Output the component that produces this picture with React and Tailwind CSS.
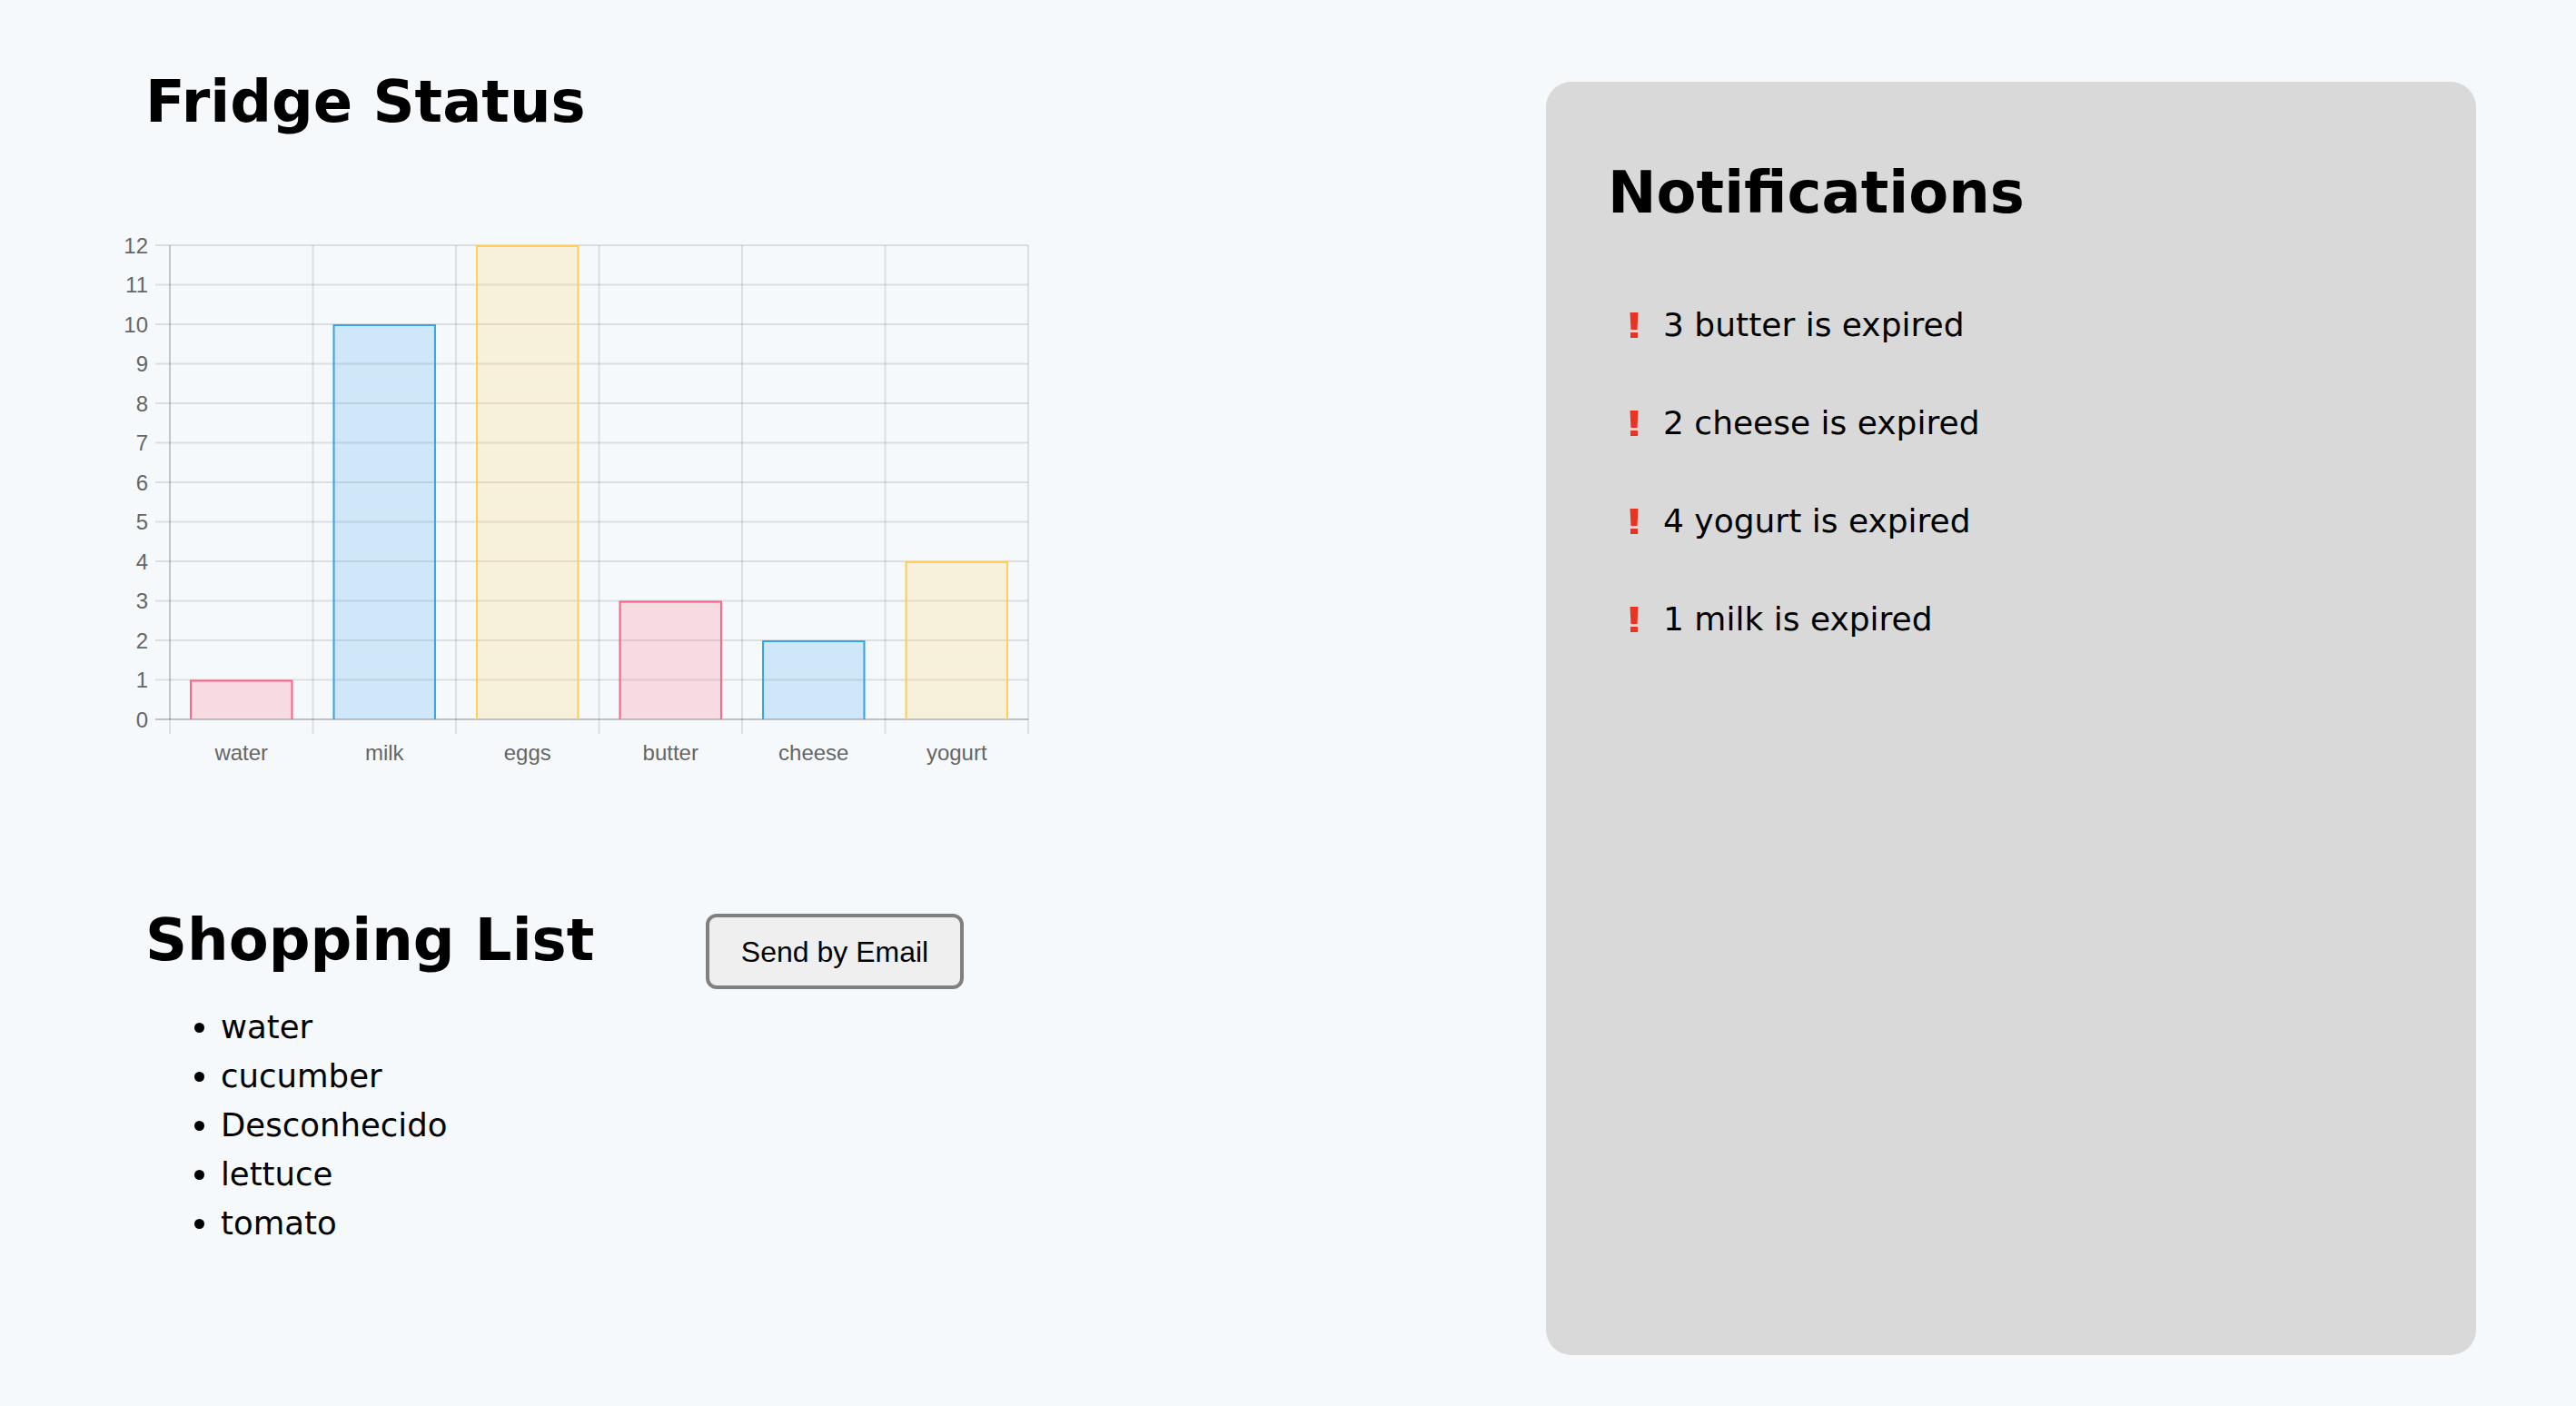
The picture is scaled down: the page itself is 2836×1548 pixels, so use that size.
import React from 'react';

const items = [
  { label: 'water', value: 1, color: 'pink' },
  { label: 'milk', value: 10, color: 'blue' },
  { label: 'eggs', value: 12, color: 'yellow' },
  { label: 'butter', value: 3, color: 'pink' },
  { label: 'cheese', value: 2, color: 'blue' },
  { label: 'yogurt', value: 4, color: 'yellow' },
];

const palette = {
  pink: { fill: 'rgba(255,99,132,0.2)', stroke: 'rgb(255,99,132)' },
  blue: { fill: 'rgba(54,162,235,0.2)', stroke: 'rgb(54,162,235)' },
  yellow: { fill: 'rgba(255,206,86,0.2)', stroke: 'rgb(255,206,86)' },
};

const shopping = ['water', 'cucumber', 'Desconhecido', 'lettuce', 'tomato'];

const notifications = [
  '3 butter is expired',
  '2 cheese is expired',
  '4 yogurt is expired',
  '1 milk is expired',
];

// chart geometry (svg coords)
const left = 67;
const right = 1012;
const top = 20;
const zero = 542;
const step = 43.5;
const col = (right - left) / 6;
const barW = col * 0.72;

function FridgeChart() {
  const ticks = Array.from({ length: 13 }, (_, i) => i);
  return (
    <svg width="1020" height="600" viewBox="0 0 1020 600" className="-ml-[40px] mt-[106px] block">
      {ticks.map((v) => {
        const y = zero - v * step;
        return (
          <line
            key={'h' + v}
            x1={51}
            x2={right}
            y1={y}
            y2={y}
            stroke={v === 0 ? 'rgba(0,0,0,0.22)' : 'rgba(0,0,0,0.1)'}
            strokeWidth="2"
          />
        );
      })}
      {Array.from({ length: 7 }, (_, i) => {
        const x = left + col * i;
        return (
          <g key={'v' + i}>
            <line x1={x} x2={x} y1={top} y2={zero} stroke={i === 0 ? 'rgba(0,0,0,0.2)' : 'rgba(0,0,0,0.1)'} strokeWidth="2" />
            <line x1={x} x2={x} y1={zero} y2={zero + 16} stroke="rgba(0,0,0,0.1)" strokeWidth="2" />
          </g>
        );
      })}
      {items.map((it, i) => {
        const x = left + col * i + (col - barW) / 2;
        const h = it.value * step;
        const y = zero - h;
        const c = palette[it.color];
        return (
          <g key={it.label}>
            <rect x={x} y={y} width={barW} height={h} fill={c.fill} />
            <polyline
              points={`${x + 1},${zero} ${x + 1},${y + 1} ${x + barW - 1},${y + 1} ${x + barW - 1},${zero}`}
              fill="none"
              stroke={c.stroke}
              strokeWidth="2"
            />
          </g>
        );
      })}
      {ticks.map((v) => (
        <text
          key={'t' + v}
          x={43}
          y={zero - v * step}
          textAnchor="end"
          dominantBaseline="central"
          fontFamily="'Liberation Sans', Arial, sans-serif"
          fontSize="24"
          fill="#666"
        >
          {v}
        </text>
      ))}
      {items.map((it, i) => (
        <text
          key={'x' + it.label}
          x={left + col * (i + 0.5)}
          y={586.7}
          textAnchor="middle"
          fontFamily="'Liberation Sans', Arial, sans-serif"
          fontSize="24"
          fill="#666"
        >
          {it.label}
        </text>
      ))}
    </svg>
  );
}

function Bang() {
  return (
    <svg width="10" height="28" viewBox="0 0 10 28" className="shrink-0">
      <polygon points="0.5,0 9.5,0 8.5,19 1.5,19" fill="#ea3323" />
      <rect x="1" y="22" width="8" height="6" fill="#ea3323" />
    </svg>
  );
}

export default function App() {
  return (
    <div className="min-h-screen w-full bg-[#f5f9fc] flex items-start text-black font-['DejaVu_Sans',Verdana,sans-serif]">
      <div className="w-[1702px] shrink-0 pl-[160px] pt-[80px]">
        <h1 className="text-[64px] leading-none font-bold">Fridge Status</h1>
        <FridgeChart />

        <div className="mt-[153px] flex items-start">
          <h1 className="w-[617px] shrink-0 text-[64px] leading-none font-bold">Shopping List</h1>
          <button className="mt-[3px] w-[284px] h-[83px] border-[4px] border-[#808080] rounded-[12px] bg-[#efefef] text-[32px] font-['Liberation_Sans',Arial,sans-serif] text-black">
            Send by Email
          </button>
        </div>
        <ul className="mt-[15px] list-disc pl-[83px] text-[35.5px] leading-[54px]">
          {shopping.map((s) => (
            <li key={s}>{s}</li>
          ))}
        </ul>
      </div>

      <div className="mt-[90px] w-[1024px] h-[1402px] shrink-0 rounded-[28px] bg-[#d9d9d9] pl-[68px] pt-[90px]">
        <h1 className="text-[64px] leading-none font-bold">Notifications</h1>
        <ul className="mt-[87px] ml-[24px] flex flex-col gap-[54px]">
          {notifications.map((n) => (
            <li key={n} className="flex items-center gap-[27px] text-[36px] leading-[54px]">
              <Bang />
              <span>{n}</span>
            </li>
          ))}
        </ul>
      </div>
    </div>
  );
}
